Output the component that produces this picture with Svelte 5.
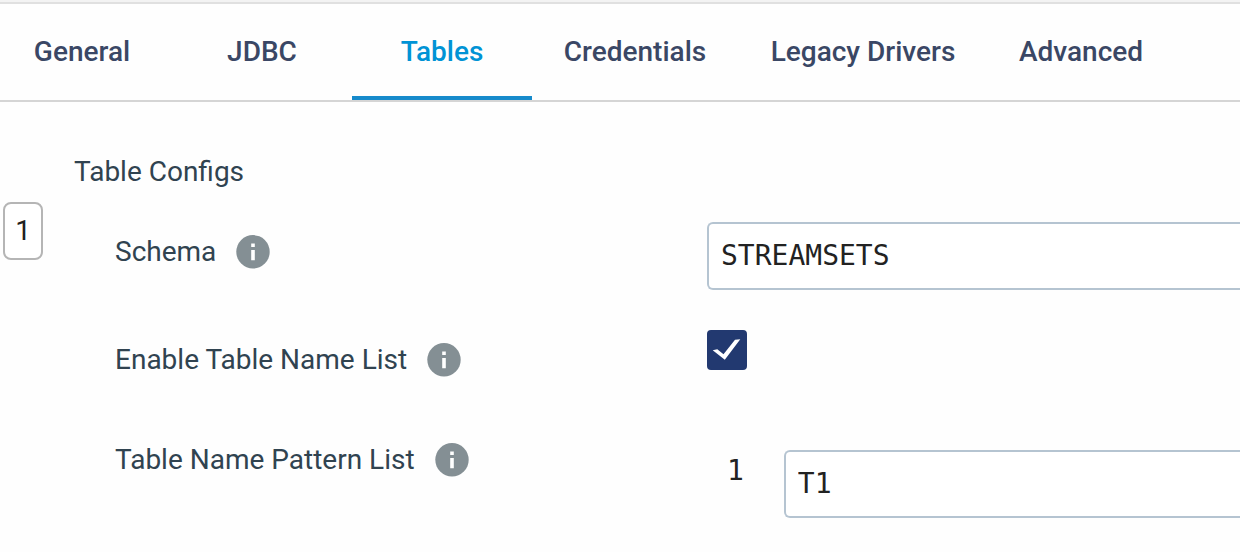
<script>
  const tabs = [
    { name: 'General', width: 'first' },
    { name: 'JDBC' },
    { name: 'Tables' },
    { name: 'Credentials', width: 'wide' },
    { name: 'Legacy Drivers', width: 'widest' },
    { name: 'Advanced' }
  ];
  let active = $state('Tables');
  let schema = $state('STREAMSETS');
  let enabled = $state(true);
  let pattern = $state('T1');
</script>

{#snippet info()}
  <svg class="info" viewBox="0 0 34 34" aria-hidden="true">
    <circle cx="17" cy="16.8" r="16.7" fill="#848f94" />
    <path d="M15.2 8.5H18.8V12H15.2ZM15.2 15H18.8V25.3H15.2Z" fill="#fff" />
  </svg>
{/snippet}

<main>
  <nav>
    {#each tabs as tab}
      <button class={['tab', tab.width, active === tab.name && 'active']} onclick={() => (active = tab.name)}>{tab.name}</button>
    {/each}
  </nav>
  <h2>Table Configs</h2>
  <section>
    <button class="index">1</button>
    <div class="fields">
      <div class="row">
        <label for="schema">Schema {@render info()}</label>
        <input id="schema" class="text" type="text" bind:value={schema} />
      </div>
      <div class="row">
        <label for="enabled">Enable Table Name List {@render info()}</label>
        <div class="check">
          <input id="enabled" type="checkbox" bind:checked={enabled} />
          <svg viewBox="0 0 40 40" aria-hidden="true">
            <path d="M5.7 20.3L10.3 19.3L16.5 24.3L28 9.8L33.3 9.2L17.8 29.7Z" fill="#fff" />
          </svg>
        </div>
      </div>
      <div class="row">
        <label for="pattern">Table Name Pattern List {@render info()}</label>
        <div class="list">
          <span>1</span>
          <input id="pattern" class="text" type="text" bind:value={pattern} />
        </div>
      </div>
    </div>
  </section>
</main>

<style>
  :global(body) { margin: 0; background: #fefefe; overflow-x: hidden; }
  * { box-sizing: border-box; }
  main { border-top: 2px solid #f3f3f3; color: #304350; font: 28px/34px Roboto, sans-serif; }
  nav { display: flex; height: 100px; border-top: 2px solid #e0e0e0; border-bottom: 2px solid #d5d5d5; }
  .tab { flex: 0 0 180px; border: 0; border-bottom: 4px solid transparent; background: none; padding: 4px 0 0; color: #3a4765; font: 500 28px/34px Roboto, sans-serif; white-space: nowrap; }
  .first { flex-basis: 172px; padding-right: 8px; }
  .wide { flex-basis: 206px; }
  .widest { flex-basis: 250px; }
  .tab:last-child { flex-basis: 186px; }
  .active { color: #0093d5; border-color: #168acb; }
  h2 { margin: 53px 0 13px 74px; font: inherit; }
  section { display: flex; align-items: flex-start; }
  .index { flex: none; width: 40px; height: 58px; margin-left: 3px; padding: 0; border: 2px solid #b5b5b5; border-radius: 8px; background: #fff; color: #202020; font: 28px/34px Roboto, sans-serif; }
  .fields { flex: 1; min-width: 0; display: grid; gap: 40px; padding: 20px 0 0 72px; }
  .row { display: grid; grid-template-columns: 592px minmax(0, 1fr); align-items: start; }
  label { display: flex; align-items: center; gap: 20px; height: 60px; }
  .info { width: 34px; height: 34px; }
  .text { display: block; width: 100%; height: 68px; border: 2px solid #b5c4d1; border-right: 0; border-radius: 6px 0 0 6px; background: #fff; padding: 0 12px 2px; color: #222; font: 28px/34px "DejaVu Sans Mono", monospace; outline: 0; }
  .check { position: relative; width: 40px; height: 40px; }
  .check input { appearance: none; display: block; width: 40px; height: 40px; margin: 0; border: 2px solid #223970; border-radius: 4px; background: #fff; }
  .check input:checked { background: #223970; }
  .check svg { position: absolute; inset: 0; pointer-events: none; }
  .check input:not(:checked) + svg { display: none; }
  .list { display: flex; gap: 40px; padding: 20px 0 0 20px; }
  .list span { padding-top: 4px; color: #222; font-family: "DejaVu Sans Mono", monospace; }
</style>
